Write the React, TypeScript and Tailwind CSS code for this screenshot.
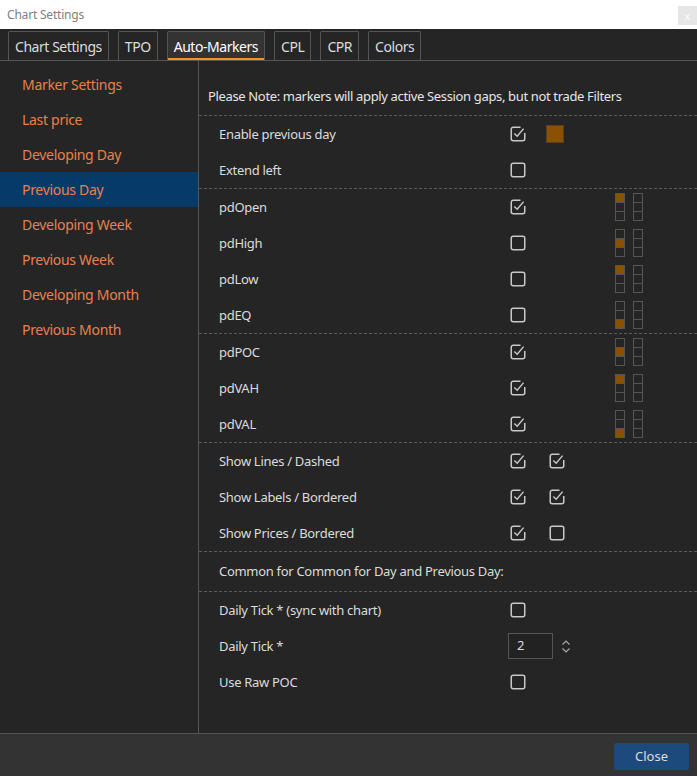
import React from 'react';

const font = { fontFamily: '"Noto Sans", "Open Sans", sans-serif' };

const tabs = ['Chart Settings', 'TPO', 'Auto-Markers', 'CPL', 'CPR', 'Colors'];

const sideItems = [
  'Marker Settings',
  'Last price',
  'Developing Day',
  'Previous Day',
  'Developing Week',
  'Previous Week',
  'Developing Month',
  'Previous Month',
];

function Check({ on }: { on: boolean }) {
  return (
    <svg width="16" height="16" viewBox="0 0 16 16" fill="none" className="block">
      {on ? (
        <>
          <path
            d="M10.5 1.25H3.25a2 2 0 0 0-2 2v9.5a2 2 0 0 0 2 2h9.5a2 2 0 0 0 2-2V7"
            stroke="#c9c9c9"
            strokeWidth="1.5"
          />
          <path d="M4.3 7.6 7.2 10.3 13.6 2.6" stroke="#c9c9c9" strokeWidth="1.4" />
        </>
      ) : (
        <rect x="1.25" y="1.25" width="13.5" height="13.5" rx="2" stroke="#c9c9c9" strokeWidth="1.5" />
      )}
    </svg>
  );
}

// position indicator: which of the 3 cells is filled (0 top, 1 mid, 2 bottom)
function Stack({ fill }: { fill: number }) {
  return (
    <div className="flex flex-col w-[10px] h-[28px] border border-[#555]">
      {[0, 1, 2].map((i) => (
        <div
          key={i}
          className={`flex-1 ${i > 0 ? 'border-t border-[#555]' : ''} ${i === fill ? 'bg-[#8a5200]' : ''}`}
        />
      ))}
    </div>
  );
}

function Row({
  label,
  a,
  b,
  pos,
  swatch,
}: {
  label: string;
  a?: boolean;
  b?: boolean;
  pos?: number;
  swatch?: boolean;
}) {
  return (
    <div className="flex items-center h-9 pl-5">
      <div className="w-[291px] pt-[2px] text-[13px] tracking-[-0.3px] text-[#dcdcdc]">{label}</div>
      <div className="w-[36px]">{a !== undefined && <Check on={a} />}</div>
      <div className="w-[69px]">
        {swatch && <div className="w-[18px] h-[18px] bg-[#8a5200] border border-[#5a4020]" />}
        {b !== undefined && (
          <div className="pl-[3px]">
            <Check on={b} />
          </div>
        )}
      </div>
      {pos !== undefined && (
        <div className="flex gap-[8px]">
          <Stack fill={pos} />
          <Stack fill={-1} />
        </div>
      )}
    </div>
  );
}

function Group({ children }: { children: React.ReactNode }) {
  return <div className="border-b border-dashed border-[#5a5a5a]">{children}</div>;
}

export default function App() {
  return (
    <div className="w-[697px] h-[776px] flex flex-col bg-[#252525] overflow-hidden" style={font}>
      {/* window title */}
      <div className="h-[29px] bg-white flex items-center justify-between pl-[7px] shrink-0">
        <span className="text-[12px] tracking-[-0.2px] text-[#808080]">Chart Settings</span>
        <div className="w-[19px] h-[19px] bg-[#e6e6e6] flex items-center justify-center text-[10px] text-white leading-none self-start mt-[6px]">
          x
        </div>
      </div>

      {/* tabs */}
      <div className="h-[32px] flex items-end gap-[9px] pl-2 border-b border-[#555] shrink-0">
        {tabs.map((t) => {
          const active = t === 'Auto-Markers';
          return (
            <div
              key={t}
              className={`h-[29px] px-[6px] flex items-center border border-b-0 border-[#555] rounded-t-[2px] text-[14px] tracking-[-0.45px] ${
                active ? 'bg-[#333] text-white shadow-[inset_0_-2px_0_#f0952b]' : 'text-[#dcdcdc]'
              }`}
            >
              {t}
            </div>
          );
        })}
      </div>

      <div className="flex flex-1 min-h-0">
        {/* sidebar */}
        <div className="w-[199px] border-r border-[#555] pt-[6px] shrink-0">
          {sideItems.map((s) => (
            <div
              key={s}
              className={`h-[35px] flex items-center pl-[22px] text-[14px] tracking-[-0.3px] text-[#e9804f] ${
                s === 'Previous Day' ? 'bg-[#063a67]' : ''
              }`}
            >
              {s}
            </div>
          ))}
        </div>

        {/* content */}
        <div className="flex-1">
          <div className="pt-[26px] pb-[10px] pl-[9px] text-[13px] leading-[18px] tracking-[-0.35px] text-[#e6e6e6] border-b border-dashed border-[#5a5a5a]">
            Please Note: markers will apply active Session gaps, but not trade Filters
          </div>
          <Group>
            <Row label="Enable previous day" a={true} swatch />
            <Row label="Extend left" a={false} />
          </Group>
          <Group>
            <Row label="pdOpen" a={true} pos={0} />
            <Row label="pdHigh" a={false} pos={1} />
            <Row label="pdLow" a={false} pos={0} />
            <Row label="pdEQ" a={false} pos={2} />
          </Group>
          <Group>
            <Row label="pdPOC" a={true} pos={1} />
            <Row label="pdVAH" a={true} pos={0} />
            <Row label="pdVAL" a={true} pos={2} />
          </Group>
          <Group>
            <Row label="Show Lines / Dashed" a={true} b={true} />
            <Row label="Show Labels / Bordered" a={true} b={true} />
            <Row label="Show Prices / Bordered" a={true} b={false} />
          </Group>
          <Group>
            <div className="h-[39px] flex items-center pl-5 text-[13px] tracking-[-0.3px] text-[#dcdcdc]">
              Common for Common for Day and Previous Day:
            </div>
          </Group>
          <div>
            <Row label="Daily Tick * (sync with chart)" a={false} />
            <div className="flex items-center h-9 pl-5">
              <div className="w-[289px] pt-[2px] text-[13px] tracking-[-0.3px] text-[#dcdcdc]">Daily Tick *</div>
              <div className="w-[45px] h-[26px] border border-[#555] bg-[#222] flex items-center pl-2 text-[13px] text-[#dcdcdc]">
                2
              </div>
              <div className="ml-[8px] flex flex-col gap-[1px]">
                <svg width="10" height="7" viewBox="0 0 10 7" fill="none">
                  <path d="M1.5 5.5 5 2 8.5 5.5" stroke="#a8a8a8" strokeWidth="1.2" />
                </svg>
                <svg width="10" height="7" viewBox="0 0 10 7" fill="none">
                  <path d="M1.5 1.5 5 5 8.5 1.5" stroke="#a8a8a8" strokeWidth="1.2" />
                </svg>
              </div>
            </div>
            <Row label="Use Raw POC" a={false} />
          </div>
        </div>
      </div>

      {/* footer */}
      <div className="h-[43px] bg-[#333] border-t border-[#555] flex items-start justify-end pt-[9px] pr-2 shrink-0">
        <button className="w-[75px] h-[27px] bg-[#1d4a7c] rounded-[2px] text-[13px] text-[#dcdcdc]">
          Close
        </button>
      </div>
    </div>
  );
}
